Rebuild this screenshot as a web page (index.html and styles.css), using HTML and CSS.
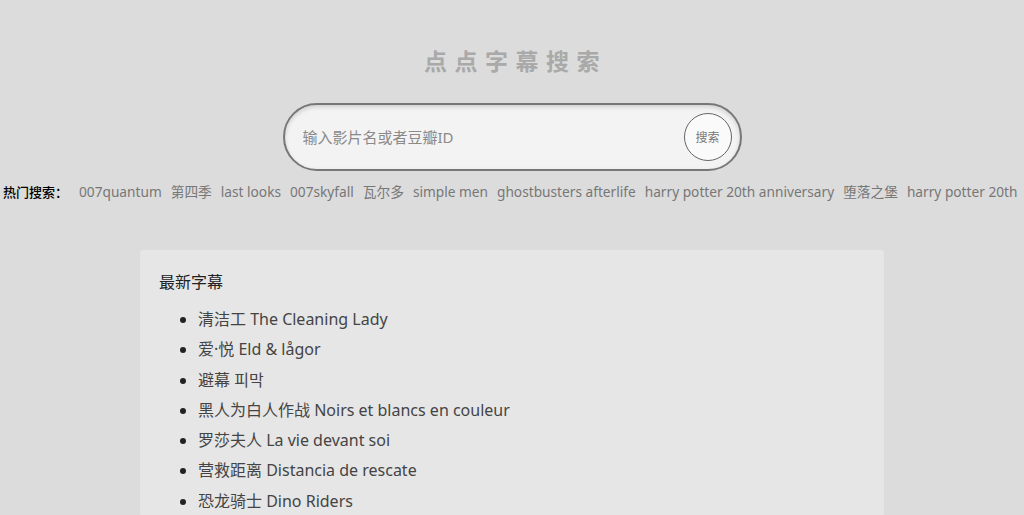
FILE: index.html
```html
<!DOCTYPE html>
<html lang="zh-CN">
<head>
<meta charset="utf-8">
<title>点点字幕搜索</title>
<link rel="stylesheet" href="styles.css">
</head>
<body>
<header class="hero">
  <h1 class="title">点点字幕搜索</h1>
  <form class="search">
    <input class="search-input" type="text" placeholder="输入影片名或者豆瓣ID">
    <button class="search-btn" type="button">搜索</button>
  </form>
</header>
<nav class="hot">
  <span class="hot-label">热门搜索：</span>
  <a class="hot-link" href="#">007quantum</a>
  <a class="hot-link" href="#">第四季</a>
  <a class="hot-link" href="#">last looks</a>
  <a class="hot-link" href="#">007skyfall</a>
  <a class="hot-link" href="#">瓦尔多</a>
  <a class="hot-link" href="#">simple men</a>
  <a class="hot-link" href="#">ghostbusters afterlife</a>
  <a class="hot-link" href="#">harry potter 20th anniversary</a>
  <a class="hot-link" href="#">堕落之堡</a>
  <a class="hot-link" href="#">harry potter 20th</a>
</nav>
<main class="card">
  <h2 class="card-title">最新字幕</h2>
  <ul class="list">
    <li><a href="#">清洁工 The Cleaning Lady</a></li>
    <li><a href="#">爱·悦 Eld &amp; lågor</a></li>
    <li><a href="#">避幕 피막</a></li>
    <li><a href="#">黑人为白人作战 Noirs et blancs en couleur</a></li>
    <li><a href="#">罗莎夫人 La vie devant soi</a></li>
    <li><a href="#">营救距离 Distancia de rescate</a></li>
    <li><a href="#">恐龙骑士 Dino Riders</a></li>
  </ul>
</main>
</body>
</html>
```
FILE: styles.css
```css
html, body {
  margin: 0;
  padding: 0;
}
body {
  background: #dcdcdc;
  font-family: "Noto Sans", "Noto Sans CJK SC", sans-serif;
  color: #333;
  overflow: hidden;
}
.hero {
  display: flex;
  flex-direction: column;
  align-items: center;
  padding-top: 45px;
}
.title {
  margin: 0;
  font-size: 23px;
  line-height: 32px;
  font-weight: bold;
  color: #a9a9a9;
  letter-spacing: 7.5px;
  padding-left: 7px;
}
.search {
  margin-top: 26px;
  width: 459px;
  height: 68px;
  box-sizing: border-box;
  border: 2px solid #777;
  border-radius: 34px;
  background: #f3f3f3;
  box-shadow: inset 0 2px 4px rgba(0,0,0,0.15);
  display: flex;
  align-items: center;
  padding: 0 8px 0 16px;
}
.search-input {
  flex: 1;
  border: none;
  background: transparent;
  outline: none;
  font-family: inherit;
  font-size: 15px;
  color: #555;
}
.search-input::placeholder {
  color: #8a8a8a;
}
.search-btn {
  width: 48px;
  height: 48px;
  border-radius: 50%;
  border: 1px solid #666;
  background: #fafafa;
  font-family: inherit;
  font-size: 12px;
  color: #777;
  padding: 0;
}
.hot {
  margin-top: 11px;
  padding-left: 3px;
  display: flex;
  flex-wrap: nowrap;
  white-space: nowrap;
  column-gap: 9px;
  font-size: 13.7px;
  line-height: 20px;
}
.hot-label {
  color: #000;
  font-size: 13px;
  font-weight: 500;
  width: 67px;
}
.hot-link {
  color: #777;
  text-decoration: none;
}
.card {
  width: 744px;
  margin: 48px auto 0;
  background: #e6e6e6;
  border-radius: 3px;
  padding: 20px 0 0 19px;
  box-sizing: border-box;
}
.card-title {
  margin: 0;
  font-size: 16px;
  font-weight: normal;
  color: #222;
  line-height: 24px;
}
.list {
  margin: 10px 0 0;
  padding-left: 39px;
}
.list li {
  font-size: 16px;
  line-height: 30.3px;
  color: #222;
}
.list a {
  color: #444;
  text-decoration: none;
}
```
